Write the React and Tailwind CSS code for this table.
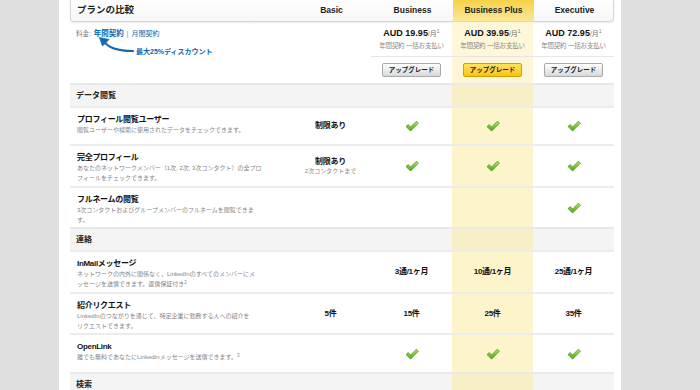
const plans = ['Basic', 'Business', 'Business Plus', 'Executive'];

const prices = [null, '19.95', '39.95', '72.95'];

const sections = [
  {
    title: 'データ閲覧',
    rows: [
      {
        name: 'プロフィール閲覧ユーザー',
        desc: ['閲覧ユーザーや検索に使用されたデータをチェックできます。'],
        values: [{ text: '制限あり' }, 'check', 'check', 'check'],
        h: 'h-[38px]',
      },
      {
        name: '完全プロフィール',
        desc: ['あなたのネットワークメンバー（1次, 2次, 3次コンタクト）の全プロ', 'フィールをチェックできます。'],
        values: [{ text: '制限あり', sub: '2次コンタクトまで' }, 'check', 'check', 'check'],
        h: 'h-[42px]',
      },
      {
        name: 'フルネームの閲覧',
        desc: ['3次コンタクトおよびグループメンバーのフルネームを閲覧できま', 'す。'],
        values: [null, null, null, 'check'],
        h: 'h-[41px]',
      },
    ],
  },
  {
    title: '連絡',
    rows: [
      {
        name: 'InMailメッセージ',
        desc: ['ネットワークの内外に関係なく、LinkedInのすべてのメンバーにメ', 'ッセージを送信できます。返信保証付き'],
        sup: '2',
        values: [null, { text: '3通/1ヶ月' }, { text: '10通/1ヶ月' }, { text: '25通/1ヶ月' }],
        h: 'h-[42px]',
      },
      {
        name: '紹介リクエスト',
        desc: ['LinkedInのつながりを通じて、特定企業に勤務する人への紹介を', 'リクエストできます。'],
        values: [{ text: '5件' }, { text: '15件' }, { text: '25件' }, { text: '35件' }],
        h: 'h-[41px]',
      },
      {
        name: 'OpenLink',
        desc: ['誰でも無料であなたにLinkedInメッセージを送信できます。'],
        sup: '3',
        values: [null, 'check', 'check', 'check'],
        h: 'h-[39px]',
      },
    ],
  },
  { title: '検索', rows: [] },
];

const Check = () => (
  <svg width="14" height="12" viewBox="0 0 14 12">
    <defs>
      <linearGradient id="chk" x1="0" y1="0" x2="0" y2="1">
        <stop offset="0" stopColor="#b6ec5a" />
        <stop offset="1" stopColor="#4aa81c" />
      </linearGradient>
    </defs>
    <path d="M1 6.6 L3.1 4.6 L5.6 7 L11.4 1.2 L13.4 3.2 L5.6 11 Z" fill="url(#chk)" stroke="#3b8a14" strokeWidth="0.7" strokeLinejoin="round" />
  </svg>
);

const Value = ({ v }) => {
  if (!v) return null;
  if (v === 'check') return <Check />;
  return (
    <div className="flex flex-col items-center">
      <span className="text-[8px] font-bold text-[#111] leading-[10px] tracking-[-0.3px]">{v.text}</span>
      {v.sub && <span className="text-[6px] text-[#888] leading-[8px]">{v.sub}</span>}
    </div>
  );
};

const Button = ({ gold }) => (
  <button
    className={
      gold
        ? 'w-[59px] h-[14px] rounded-[2px] border border-[#d1a200] bg-gradient-to-b from-[#ffe35c] to-[#f6c500] text-[6.5px] font-bold text-[#222] leading-none'
        : 'w-[59px] h-[14px] rounded-[2px] border border-[#a9a9a9] bg-gradient-to-b from-white to-[#d9d9d9] text-[6.5px] font-bold text-[#222] leading-none'
    }
  >
    アップグレード
  </button>
);

const colBg = (i) => (i === 2 ? 'bg-[#fdf4cc]' : '');

const App = () => {
  return (
    <div className="w-[700px] h-[390px] overflow-hidden bg-[#dfdfdf] font-['Liberation_Sans','Noto_Sans_CJK_JP',sans-serif]">
      <div className="ml-[59px] w-[562px] h-full bg-white pl-[11px] pr-[7px]">
        {/* header */}
        <div className="grid grid-cols-[220px_81px_81px_81px_81px] h-[22px] border border-t-0 border-[#d6d6d6] rounded-b-[4px] shadow-[0_1px_2px_rgba(0,0,0,0.08)] bg-gradient-to-b from-white to-[#f7f7f7] overflow-hidden">
          <div className="flex items-center pl-[6px] text-[9.5px] font-bold text-[#222]">プランの比較</div>
          {plans.map((p, i) => (
            <div
              key={p}
              className={
                i === 2
                  ? 'flex items-center justify-center text-[8.5px] font-bold text-[#222] bg-gradient-to-b from-[#f6d247] to-[#fbe695]'
                  : 'flex items-center justify-center text-[8.5px] font-bold text-[#222]'
              }
            >
              {p}
            </div>
          ))}
        </div>

        {/* prices */}
        <div className="grid grid-cols-[220px_81px_81px_81px_81px] h-[35px]">
          <div className="relative pl-[6px] pt-[7px]">
            <div className="flex items-center gap-[3px] text-[6.5px] leading-[10px]">
              <span className="text-[#777]">料金:</span>
              <span className="text-[7.5px] font-bold text-[#0b66ad]">年間契約</span>
              <span className="text-[#777]">|</span>
              <span className="text-[7px] text-[#0b66ad]">月間契約</span>
            </div>
            <svg className="absolute left-[28px] top-[14px]" width="38" height="20" viewBox="0 0 38 20">
              <path d="M6 5 C 10 12, 20 15, 35 15" fill="none" stroke="#1769ae" strokeWidth="2.2" strokeLinecap="round" />
              <path d="M1.5 1.5 L11 3.5 L4.5 10 Z" fill="#1769ae" stroke="#1769ae" strokeWidth="0.8" strokeLinejoin="round" />
            </svg>
            <span className="absolute left-[66px] top-[25px] text-[7px] font-bold text-[#0b66ad] leading-[10px]">最大25%ディスカウント</span>
          </div>
          {prices.map((p, i) => (
            <div
              key={i}
              className={
                (i > 0 ? 'border-b border-[#e6e6e6] ' : '') +
                (i === 2 ? 'bg-[#fef7d8] ' : '') +
                'flex flex-col items-center pt-[6px]'
              }
            >
              {p && (
                <>
                  <span className="text-[9px] font-bold text-[#111] leading-[11px] whitespace-nowrap">
                    AUD {p}
                    <span className="font-normal text-[#777] text-[7px]">/月</span>
                    <span className="relative -top-[3px] font-normal text-[#777] text-[5px]">1</span>
                  </span>
                  <span className="text-[6.5px] text-[#888] leading-[12px] whitespace-nowrap tracking-[-0.2px]">年間契約 一括お支払い</span>
                </>
              )}
            </div>
          ))}
        </div>

        {/* buttons */}
        <div className="grid grid-cols-[220px_81px_81px_81px_81px] h-[26px]">
          <div />
          {prices.map((p, i) => (
            <div key={i} className={'flex items-center justify-center ' + (i === 2 ? 'bg-[#fef6d6]' : '')}>
              {p && <Button gold={i === 2} />}
            </div>
          ))}
        </div>

        {sections.map((s) => (
          <div key={s.title}>
            <div className="grid grid-cols-[220px_81px_81px_81px_81px] h-[23px] border-t-2 border-[#e9e9e9] bg-[#f4f4f4]">
              <div className="flex items-center pl-[6px] text-[8px] font-bold text-[#222]">{s.title}</div>
              {plans.map((p, i) => (
                <div key={p} className={i === 2 ? 'bg-[#f9efc7]' : ''} />
              ))}
            </div>
            {s.rows.map((r) => (
              <div key={r.name} className={'grid grid-cols-[220px_81px_81px_81px_81px] border-t-2 border-[#ececec] ' + r.h}>
                <div className="pl-[7px] pt-[6px]">
                  <div className="text-[8px] font-bold text-[#111] leading-[11px] tracking-[-0.3px]">{r.name}</div>
                  {r.desc.map((d, k) => (
                    <div key={k} className="text-[6px] text-[#858585] leading-[10px] whitespace-nowrap">
                      {d}
                      {r.sup && k === r.desc.length - 1 && (
                        <span className="relative -top-[2px] text-[4.5px]">{r.sup}</span>
                      )}
                    </div>
                  ))}
                </div>
                {r.values.map((v, i) => (
                  <div key={i} className={colBg(i) + ' flex items-center justify-center'}>
                    <Value v={v} />
                  </div>
                ))}
              </div>
            ))}
          </div>
        ))}
      </div>
    </div>
  );
};

export default App;
